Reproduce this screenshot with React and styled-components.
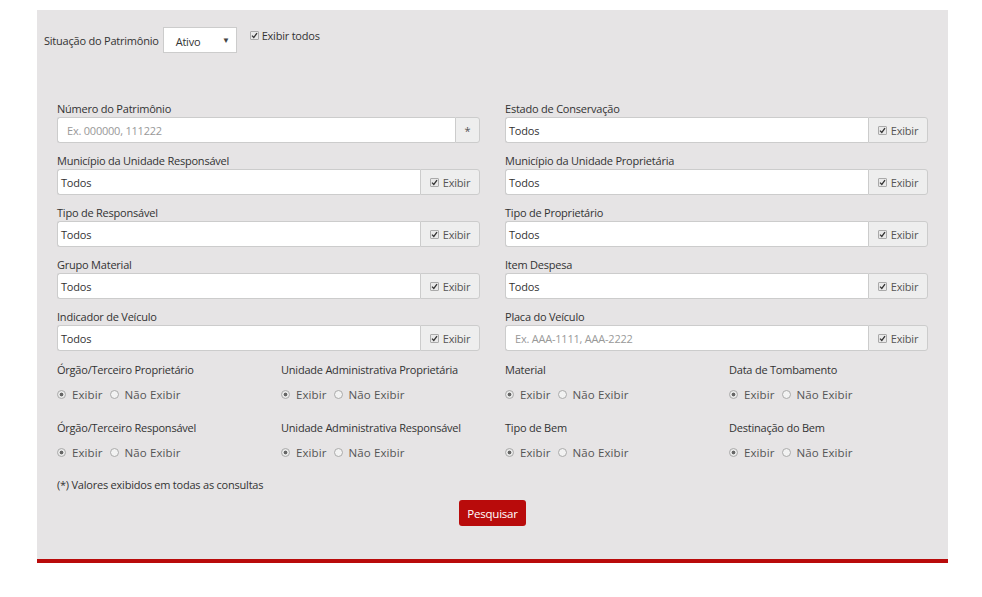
import React from "react";
import styled, { createGlobalStyle } from "styled-components";

const GlobalStyle = createGlobalStyle`
  body {
    margin: 0;
    background: #fff;
    font-family: "Open Sans", "Liberation Sans", sans-serif;
    font-size: 11px;
    letter-spacing: -0.22px;
    color: #333;
  }
`;

const campos = [
  { label: "Número do Patrimônio", placeholder: "Ex. 000000, 111222", addon: "*" },
  { label: "Estado de Conservação", value: "Todos" },
  { label: "Município da Unidade Responsável", value: "Todos" },
  { label: "Município da Unidade Proprietária", value: "Todos" },
  { label: "Tipo de Responsável", value: "Todos" },
  { label: "Tipo de Proprietário", value: "Todos" },
  { label: "Grupo Material", value: "Todos" },
  { label: "Item Despesa", value: "Todos" },
  { label: "Indicador de Veículo", value: "Todos" },
  { label: "Placa do Veículo", placeholder: "Ex. AAA-1111, AAA-2222" }
];

const opcoes = [
  "Órgão/Terceiro Proprietário",
  "Unidade Administrativa Proprietária",
  "Material",
  "Data de Tombamento",
  "Órgão/Terceiro Responsável",
  "Unidade Administrativa Responsável",
  "Tipo de Bem",
  "Destinação do Bem"
];

function Check() {
  return (
    <CheckBox>
      <svg width="7" height="7" viewBox="0 0 7 7">
        <path d="M1 3.6 L2.8 5.4 L6 1.2" fill="none" stroke="#333" strokeWidth="1.3" />
      </svg>
    </CheckBox>
  );
}

export default function App() {
  return (
    <Page>
      <GlobalStyle />
      <Panel>
        <TopRow>
          <span>Situação do Patrimônio</span>
          <Select>
            <span>Ativo</span>
            <Arrow>▼</Arrow>
          </Select>
          <TopCheck>
            <Check />
            <span>Exibir todos</span>
          </TopCheck>
        </TopRow>

        <FieldGrid>
          {campos.map(c => (
            <Field key={c.label}>
              <Label>{c.label}</Label>
              <Group>
                <Input $placeholder={!!c.placeholder}>{c.placeholder || c.value}</Input>
                {c.addon ? (
                  <Addon $narrow>*</Addon>
                ) : (
                  <Addon>
                    <Check />
                    <span>Exibir</span>
                  </Addon>
                )}
              </Group>
            </Field>
          ))}
        </FieldGrid>

        <OptionGrid>
          {opcoes.map(o => (
            <div key={o}>
              <Label>{o}</Label>
              <RadioRow>
                <Radio $checked />
                <RadioText>Exibir</RadioText>
                <Radio />
                <RadioText>Não Exibir</RadioText>
              </RadioRow>
            </div>
          ))}
        </OptionGrid>

        <Note>(*) Valores exibidos em todas as consultas</Note>
        <Actions>
          <Button>Pesquisar</Button>
        </Actions>
      </Panel>
    </Page>
  );
}

const Page = styled.div`
  padding: 10px 0 0 37px;
`;

const Panel = styled.div`
  width: 911px;
  height: 553px;
  box-sizing: border-box;
  background: #e6e4e5;
  border-bottom: 4px solid #b90b0b;
  padding-top: 17px;
`;

const TopRow = styled.div`
  display: flex;
  align-items: center;
  height: 26px;
  padding-left: 7px;
`;

const Select = styled.div`
  display: flex;
  align-items: center;
  justify-content: space-between;
  box-sizing: border-box;
  width: 74px;
  height: 26px;
  margin-left: 4px;
  padding: 3px 6px 0 12px;
  background: #fff;
  border: 1px solid #ccc;
`;

const Arrow = styled.span`
  font-size: 8px;
  color: #444;
  margin-top: -5px;
`;

const TopCheck = styled.div`
  display: flex;
  align-items: center;
  gap: 3px;
  margin-left: 13px;
  align-self: flex-start;
  margin-top: 1px;
`;

const CheckBox = styled.span`
  display: inline-flex;
  align-items: center;
  justify-content: center;
  box-sizing: border-box;
  width: 9px;
  height: 9px;
  border: 1px solid #aaa;
  border-radius: 1px;
  background: #e9e9e9;
`;

const FieldGrid = styled.div`
  display: grid;
  grid-template-columns: 423px 423px;
  column-gap: 25px;
  row-gap: 9px;
  padding: 0 20px;
  margin-top: 47px;
`;

const Field = styled.div`
  display: flex;
  flex-direction: column;
`;

const Label = styled.div`
  line-height: 17px;
  height: 17px;
  white-space: nowrap;
`;

const Group = styled.div`
  display: flex;
  height: 26px;
`;

const Input = styled.div`
  flex: 1;
  display: flex;
  align-items: center;
  box-sizing: border-box;
  padding: 0 ${p => (p.$placeholder ? "9px" : "3px")};
  background: #fff;
  border: 1px solid #ccc;
  border-right: none;
  border-radius: 3px 0 0 3px;
  color: ${p => (p.$placeholder ? "#999" : "#333")};
`;

const Addon = styled.div`
  display: flex;
  align-items: center;
  justify-content: center;
  gap: 4px;
  box-sizing: border-box;
  width: ${p => (p.$narrow ? "25px" : "60px")};
  padding-top: 1px;
  background: #eeeeee;
  border: 1px solid #ccc;
  border-radius: 0 3px 3px 0;
  color: #555;
`;

const OptionGrid = styled.div`
  display: grid;
  grid-template-columns: repeat(4, 224px);
  row-gap: 16px;
  padding: 0 20px;
  margin-top: 10px;
`;

const RadioRow = styled.div`
  display: flex;
  align-items: center;
  height: 17px;
  margin-top: 8px;
  color: #555;
`;

const RadioText = styled.span`
  margin: 0 7px 0 6px;
  font-size: 11.5px;
  letter-spacing: 0.1px;
`;

const Radio = styled.span`
  box-sizing: border-box;
  width: 9px;
  height: 9px;
  border-radius: 50%;
  border: 1px solid #aaa;
  background: ${p => (p.$checked ? "radial-gradient(circle, #666 0 1.6px, #e9e9e9 2.2px)" : "#f2f2f2")};
`;

const Note = styled.div`
  padding: 0 20px;
  margin-top: 15px;
  line-height: 17px;
`;

const Actions = styled.div`
  display: flex;
  justify-content: center;
  margin-top: 7px;
`;

const Button = styled.button`
  height: 26px;
  width: 67px;
  padding: 0;
  border: none;
  border-radius: 3px;
  background: #b90b0b;
  color: #fff;
  font-family: inherit;
  font-size: 11.5px;
  letter-spacing: -0.2px;
`;
